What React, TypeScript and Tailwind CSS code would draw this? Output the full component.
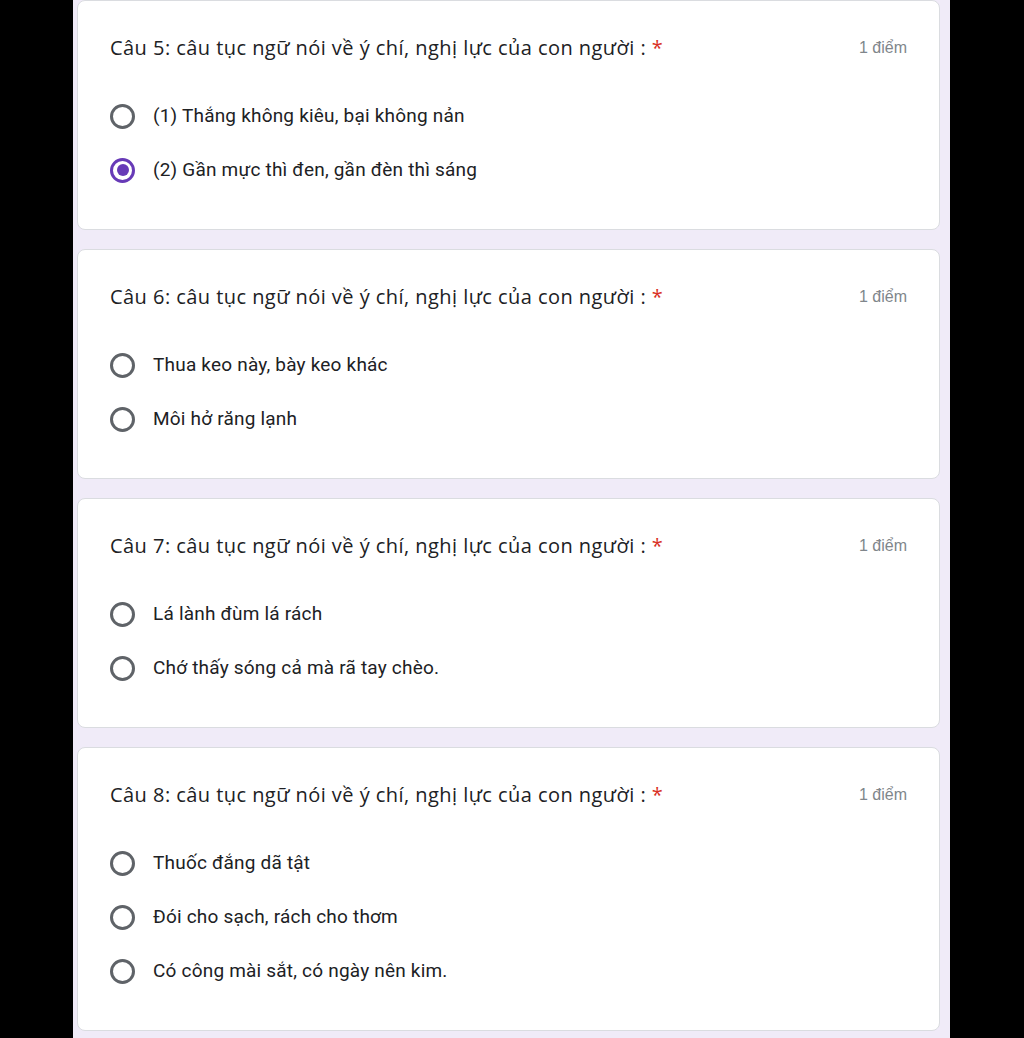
import React from "react";

type Question = {
  num: number
  options: string[]
  selected?: number
}

const questions: Question[] = [
  { num: 5, options: ["(1) Thắng không kiêu, bại không nản", "(2) Gần mực thì đen, gần đèn thì sáng"], selected: 1 },
  { num: 6, options: ["Thua keo này, bày keo khác", "Môi hở răng lạnh"] },
  { num: 7, options: ["Lá lành đùm lá rách", "Chớ thấy sóng cả mà rã tay chèo."] },
  { num: 8, options: ["Thuốc đắng dã tật", "Đói cho sạch, rách cho thơm", "Có công mài sắt, có ngày nên kim."] },
]

function Radio({ checked }: { checked?: boolean }) {
  if (checked) {
    return (
      <div className="w-[25px] h-[25px] rounded-full border-[3px] border-[#673ab7] flex items-center justify-center shrink-0">
        <div className="w-[12px] h-[12px] rounded-full bg-[#673ab7]" />
      </div>
    )
  }
  return <div className="w-[25px] h-[25px] rounded-full border-[3px] border-[#5f6368] shrink-0" />
}

function Card({ q }: { q: Question }) {
  return (
    <div className="bg-white rounded-[8px] border border-[#dadce0] pt-[35px] pb-[32px] px-[32px]">
      <div className="flex items-center justify-between h-[24px]">
        <div className="text-[20px] text-[#202124] tracking-[0.45px]" style={{ fontFamily: '"Open Sans", sans-serif' }}>
          Câu {q.num}: câu tục ngữ nói về ý chí, nghị lực của con người : <span className="text-[#d93025]">*</span>
        </div>
        <div className="text-[16px] text-[#80868b]" style={{ fontFamily: '"Liberation Sans", sans-serif' }}>1 điểm</div>
      </div>
      <div className="mt-[29px] flex flex-col">
        {q.options.map((o, i) => (
          <div key={i} className="h-[54px] flex items-center">
            <Radio checked={q.selected === i} />
            <span className="ml-[18px] text-[19px] tracking-[0.2px] text-[#202124]" style={{ fontFamily: 'Roboto, sans-serif' }}>{o}</span>
          </div>
        ))}
      </div>
    </div>
  )
}

export default function App() {
  return (
    <div className="w-[1024px] h-[1038px] bg-black flex overflow-hidden">
      <div className="ml-[73px] w-[877px] h-full bg-[#f0ebf8] pl-[4px] pr-[10px] flex flex-col gap-[19px]">
        {questions.map(q => <Card key={q.num} q={q} />)}
      </div>
    </div>
  )
}
